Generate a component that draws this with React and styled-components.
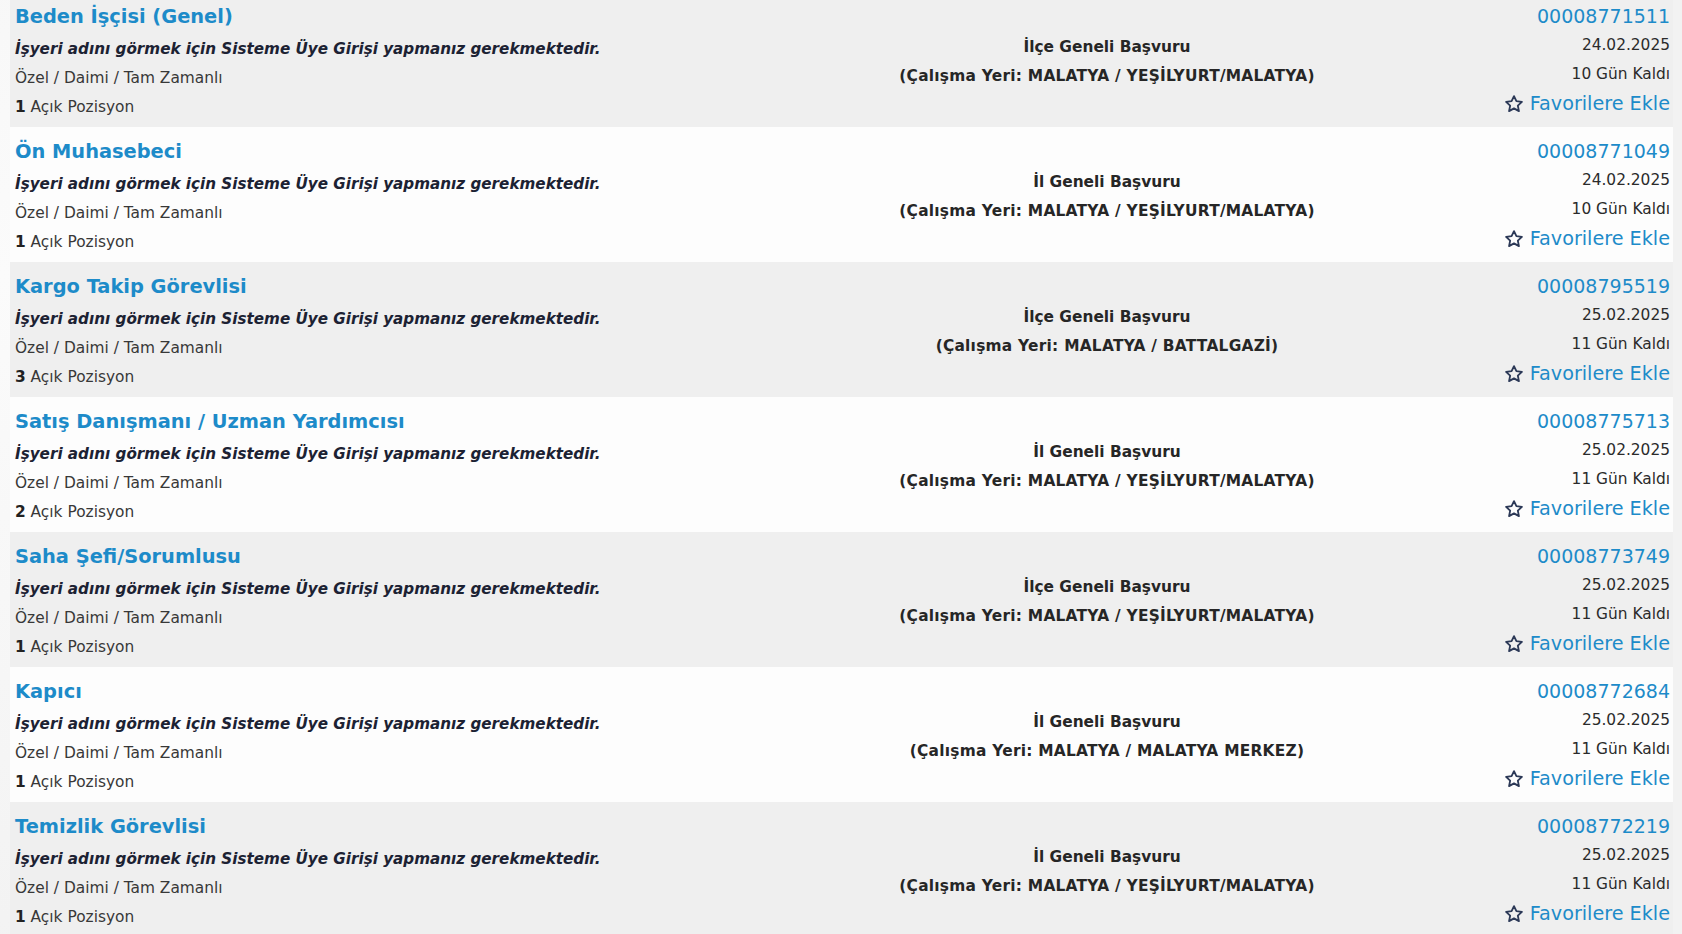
import React from 'react';
import styled, { createGlobalStyle } from 'styled-components';

const GlobalStyle = createGlobalStyle`
  html, body {
    margin: 0;
    padding: 0;
    background: #f5f5f5;
    font-family: "DejaVu Sans", Verdana, sans-serif;
    overflow: hidden;
  }
  * {
    box-sizing: border-box;
  }
`;

const Page = styled.div`
  padding: 0 9px 0 10px;
  background-color: #f4f4f4;
  background-image: radial-gradient(circle at 0 30%, #fbfbfb 0, #f2f2f2 40%);
`;

const List = styled.div`
  margin-top: -8px;
  display: flex;
  flex-direction: column;
`;

const Row = styled.div`
  display: grid;
  grid-template-columns: 1fr 726px 200px;
  height: 135px;
  padding: 10px 3px 5px 5px;
  background: ${(p) => (p.$alt ? '#fdfdfd' : '#efefef')};
`;

const LeftCol = styled.div`
  display: flex;
  flex-direction: column;
  min-width: 0;
`;

const Title = styled.a`
  font-size: 19.4px;
  font-weight: bold;
  line-height: 29px;
  color: #1d8bc9;
  text-decoration: none;
  margin-bottom: 4px;
  white-space: nowrap;
`;

const Line = styled.div`
  font-size: 15.4px;
  line-height: 29px;
  color: #383838;
  white-space: nowrap;

  b {
    color: #222;
  }
`;

const Notice = styled(Line)`
  font-size: 15.2px;
  font-style: italic;
  font-weight: bold;
  color: #1c2233;
`;

const MiddleCol = styled.div`
  align-self: center;
  text-align: center;
  font-size: 15.4px;
  font-weight: bold;
  line-height: 29px;
  color: #262626;
  white-space: nowrap;
`;

const PlaceLine = styled.div`
  letter-spacing: 0.25px;
`;

const RightCol = styled.div`
  display: flex;
  flex-direction: column;
  align-items: flex-end;
  white-space: nowrap;
`;

const JobNo = styled.a`
  font-size: 19px;
  line-height: 29px;
  color: #1d8bc9;
  text-decoration: none;
`;

const Meta = styled.div`
  font-size: 15.4px;
  line-height: 29px;
  color: #2b2b2b;
`;

const FavButton = styled.a`
  display: flex;
  align-items: center;
  gap: 6px;
  font-size: 19.2px;
  line-height: 29px;
  color: #1d8bc9;
  text-decoration: none;
  cursor: pointer;

  svg {
    width: 20px;
    height: 20px;
  }
`;

const StarIcon = () => (
  <svg viewBox="0 0 24 24" fill="none" stroke="#2c3957" strokeWidth="2.2" strokeLinejoin="round">
    <polygon points="12,2.5 14.9,8.6 21.5,9.4 16.6,13.9 17.9,20.5 12,17.2 6.1,20.5 7.4,13.9 2.5,9.4 9.1,8.6" />
  </svg>
);

const jobs = [
  { title: 'Beden İşçisi (Genel)', no: '00008771511', scope: 'İlçe Geneli Başvuru', place: 'MALATYA / YEŞİLYURT/MALATYA', date: '24.02.2025', left: '10 Gün Kaldı', count: 1 },
  { title: 'Ön Muhasebeci', no: '00008771049', scope: 'İl Geneli Başvuru', place: 'MALATYA / YEŞİLYURT/MALATYA', date: '24.02.2025', left: '10 Gün Kaldı', count: 1 },
  { title: 'Kargo Takip Görevlisi', no: '00008795519', scope: 'İlçe Geneli Başvuru', place: 'MALATYA / BATTALGAZİ', date: '25.02.2025', left: '11 Gün Kaldı', count: 3 },
  { title: 'Satış Danışmanı / Uzman Yardımcısı', no: '00008775713', scope: 'İl Geneli Başvuru', place: 'MALATYA / YEŞİLYURT/MALATYA', date: '25.02.2025', left: '11 Gün Kaldı', count: 2 },
  { title: 'Saha Şefi/Sorumlusu', no: '00008773749', scope: 'İlçe Geneli Başvuru', place: 'MALATYA / YEŞİLYURT/MALATYA', date: '25.02.2025', left: '11 Gün Kaldı', count: 1 },
  { title: 'Kapıcı', no: '00008772684', scope: 'İl Geneli Başvuru', place: 'MALATYA / MALATYA MERKEZ', date: '25.02.2025', left: '11 Gün Kaldı', count: 1 },
  { title: 'Temizlik Görevlisi', no: '00008772219', scope: 'İl Geneli Başvuru', place: 'MALATYA / YEŞİLYURT/MALATYA', date: '25.02.2025', left: '11 Gün Kaldı', count: 1 },
];

const JobRow = ({ job, alt }) => (
  <Row $alt={alt}>
    <LeftCol>
      <Title href="#">{job.title}</Title>
      <Notice>İşyeri adını görmek için Sisteme Üye Girişi yapmanız gerekmektedir.</Notice>
      <Line>Özel / Daimi / Tam Zamanlı</Line>
      <Line><b>{job.count}</b> Açık Pozisyon</Line>
    </LeftCol>
    <MiddleCol>
      <div>{job.scope}</div>
      <PlaceLine>(Çalışma Yeri: {job.place})</PlaceLine>
    </MiddleCol>
    <RightCol>
      <JobNo href="#">{job.no}</JobNo>
      <Meta>{job.date}</Meta>
      <Meta>{job.left}</Meta>
      <FavButton>
        <StarIcon />
        Favorilere Ekle
      </FavButton>
    </RightCol>
  </Row>
);

export default function App() {
  return (
    <Page>
      <GlobalStyle />
      <List>
        {jobs.map((job, i) => (
          <JobRow key={job.no} job={job} alt={i % 2 === 1} />
        ))}
      </List>
    </Page>
  );
}
